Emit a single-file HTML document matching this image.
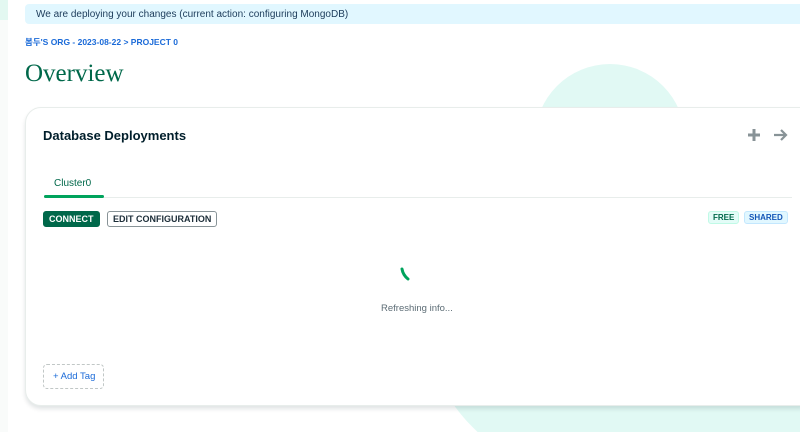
<!DOCTYPE html>
<html><head><meta charset="utf-8"><style>
*{margin:0;padding:0;box-sizing:border-box}
html,body{width:800px;height:432px;overflow:hidden}
body{background:#fff;font-family:"Liberation Sans","Noto Sans CJK KR",sans-serif}
.wrap{position:relative;width:800px;height:432px;overflow:hidden}
.side{position:absolute;left:0;top:0;width:8px;height:432px;background:#f9fbfa}
.side:before{content:"";position:absolute;left:0;top:0;width:8px;height:20px;background:#e3f8f1}
.c1{position:absolute;left:535px;top:64px;width:150px;height:150px;border-radius:50%;background:#e1f9f4}
.c2{position:absolute;left:420px;top:120px;width:360px;height:360px;border-radius:50%;background:#e1f9f4}
.c3{position:absolute;left:600px;top:300px;width:400px;height:400px;border-radius:50%;background:#e1f9f4}
.banner{position:absolute;left:25px;top:4px;width:790px;height:20px;background:#e1f7ff;border-radius:4px;font-size:10px;color:#1c3b5a;padding:5px 11px;line-height:11px}
.crumb{position:absolute;left:25px;top:36px;font-size:8.5px;font-weight:bold;color:#1a6ad8}
h1{position:absolute;left:25px;top:60px;font-family:"Liberation Serif",serif;font-weight:normal;font-size:25px;color:#00684a}
.card{position:absolute;left:25px;top:107px;width:790px;height:299px;background:#fff;border:1px solid #e8edeb;border-radius:16px;box-shadow:0 3px 4px rgba(0,30,43,.12)}
.title{position:absolute;left:17px;top:20px;font-size:13px;font-weight:bold;color:#001e2b}
.tab{position:absolute;left:28px;top:70px;font-size:10px;color:#00684a}
.tabline{position:absolute;left:18px;top:87px;width:60px;height:3px;background:#00a35c;border-radius:2px}
.rule{position:absolute;left:18px;top:89px;width:748px;height:1px;background:#e8edeb}
.btn{position:absolute;top:103px;height:16px;font-size:9px;font-weight:bold;border-radius:3px;line-height:14px;padding:0 5px}
.connect{left:17px;background:#00684a;color:#fff;border:1px solid #00684a}
.edit{left:81px;background:#fff;color:#1c2d38;border:1px solid #889397}
.badge{position:absolute;top:103px;height:13px;font-size:8px;font-weight:bold;border-radius:3px;line-height:11px;padding:0 4px}
.free{left:682px;background:#e3fcf7;color:#00684a;border:1px solid #c0fae6}
.shared{left:718px;background:#e1f7ff;color:#1254b7;border:1px solid #c3e7fe}
.refresh{position:absolute;left:355px;top:195px;font-size:9.5px;color:#5c6c75}
.tag{position:absolute;left:17px;top:256px;width:61px;height:25px;border:1px dashed #c1c7c6;border-radius:4px;font-size:9.5px;color:#1a6ad8;padding:6px 0 0 9px}
</style></head><body><div class="wrap">
<div class="side"></div>
<div class="c1"></div><div class="c2"></div><div class="c3"></div>
<div class="banner">We are deploying your changes (current action: configuring MongoDB)</div>
<div class="crumb">봄두'S ORG - 2023-08-22 &gt; PROJECT 0</div>
<h1>Overview</h1>
<div class="card">
<div class="title">Database Deployments</div>
<svg style="position:absolute;left:720px;top:19px" width="48" height="16" viewBox="0 0 48 16"><path d="M8 2v12M2 8h12" stroke="#889397" stroke-width="3"/><path d="M28 8h12M35 3l5 5-5 5" stroke="#889397" stroke-width="2.2" fill="none"/></svg>
<div class="tab">Cluster0</div>
<div class="rule"></div><div class="tabline"></div>
<div class="btn connect">CONNECT</div>
<div class="btn edit">EDIT CONFIGURATION</div>
<div class="badge free">FREE</div>
<div class="badge shared">SHARED</div>
<svg style="position:absolute;left:372px;top:158px" width="16" height="20"><path d="M4 3q1 6 6 10" stroke="#00a35c" stroke-width="3" stroke-linecap="round" fill="none"/></svg>
<div class="refresh">Refreshing info...</div>
<div class="tag">+ Add Tag</div>
</div>
</div></body></html>
